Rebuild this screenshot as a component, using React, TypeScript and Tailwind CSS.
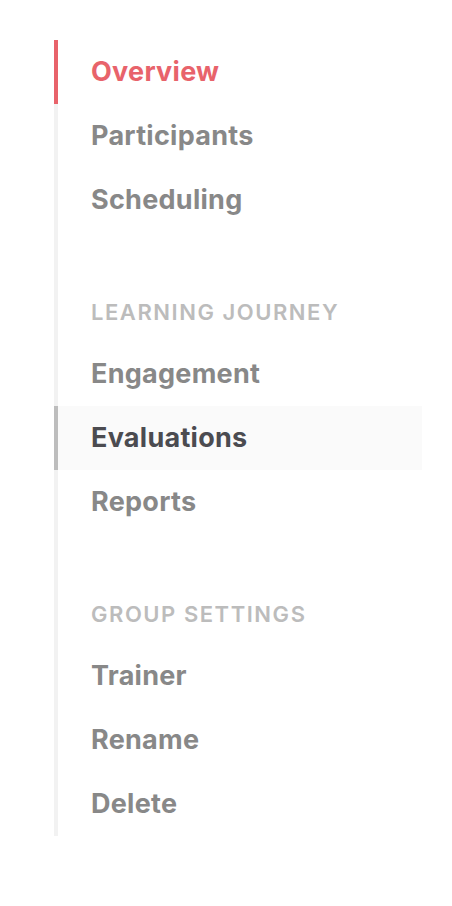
const sections = [
  { title: "", items: ["Overview", "Participants", "Scheduling"] },
  { title: "LEARNING JOURNEY", items: ["Engagement", "Evaluations", "Reports"] },
  { title: "GROUP SETTINGS", items: ["Trainer", "Rename", "Delete"] },
];

export default function App() {
  const active = "Overview";
  const hovered = "Evaluations";
  return (
    <div className="min-h-screen bg-white pt-10 pl-[54px] pr-[30px] font-['Inter','Liberation_Sans',sans-serif]">
      <nav className="border-l-4 border-[#f2f2f2]">
        {sections.map((section) => (
          <div key={section.items[0]}>
            {section.title && (
              <div className="pt-16 pb-[14px] pl-[33px] h-[110px] flex items-center">
                <span className="text-[22px] leading-8 font-semibold tracking-[0.07em] text-[#bcbcbc]">
                  {section.title}
                </span>
              </div>
            )}
            {section.items.map((item) => {
              const isActive = item === active;
              const isHover = item === hovered;
              return (
                <a
                  key={item}
                  href="#"
                  className={
                    "-ml-1 flex h-16 items-center border-l-4 pl-[33px] text-[27px] font-bold tracking-[0.01em] " +
                    (isActive
                      ? "border-[#e8636b] text-[#e8636b]"
                      : isHover
                        ? "border-[#bdbdbd] bg-[#fafafa] text-[#4b4b50]"
                        : "border-transparent text-[#888888]")
                  }
                >
                  {item}
                </a>
              );
            })}
          </div>
        ))}
      </nav>
    </div>
  );
}
